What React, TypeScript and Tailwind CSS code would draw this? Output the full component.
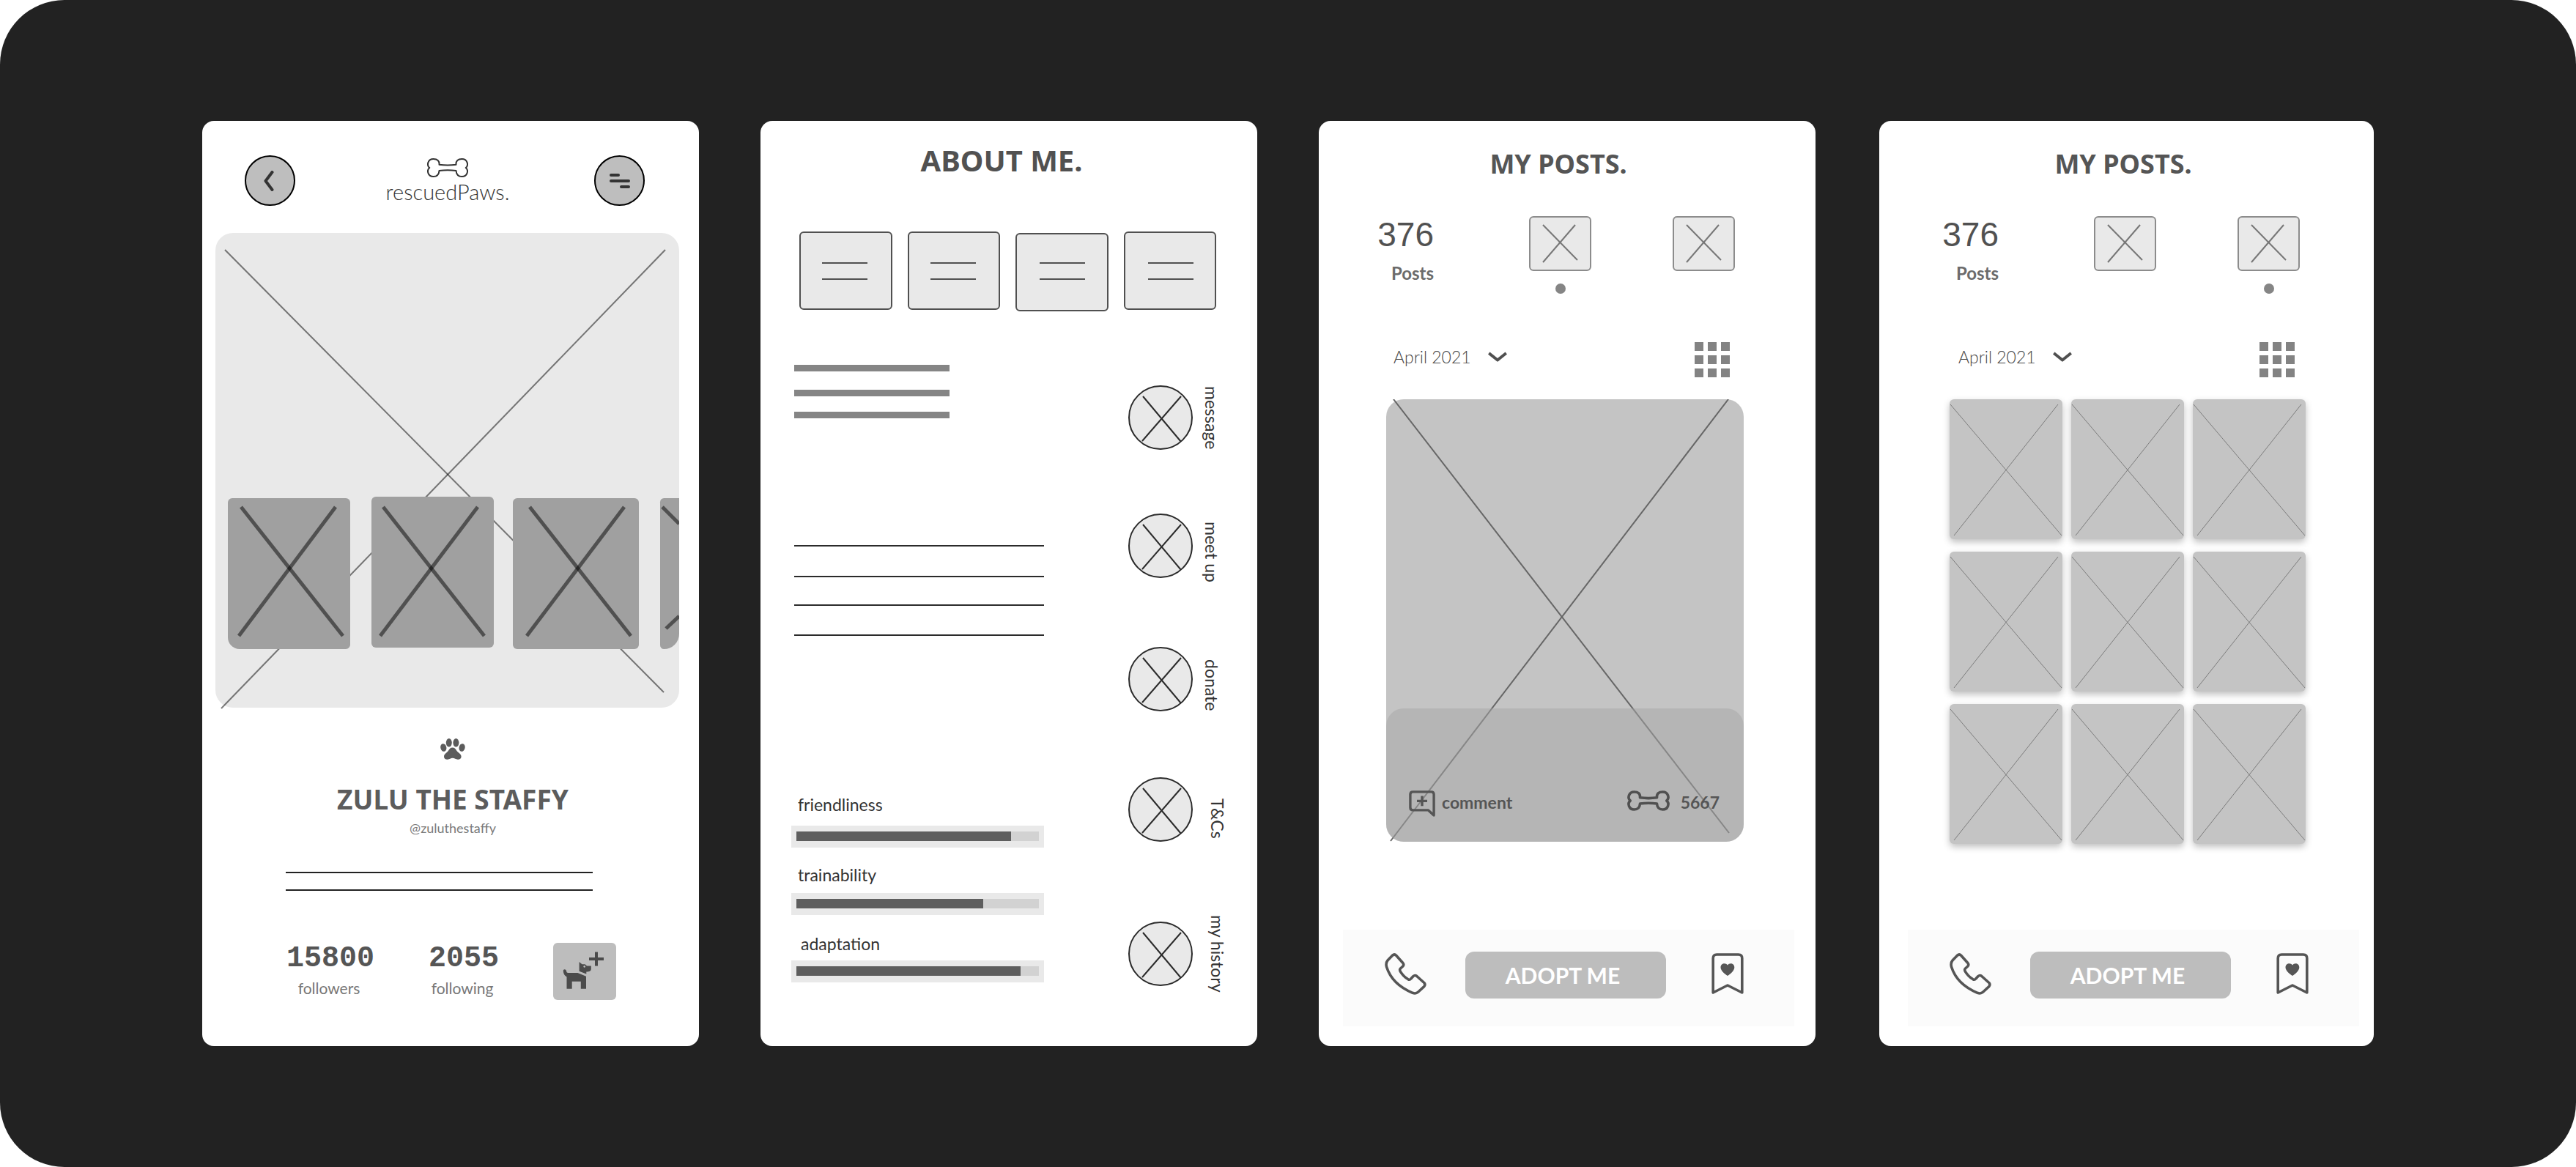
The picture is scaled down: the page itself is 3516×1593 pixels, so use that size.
import React from "react";

type LineProps = { className: string };

function Line({ className }: LineProps) {
  return <div className={className} />;
}

function BoneIcon({ className }: { className: string }) {
  return (
    <svg viewBox="0 0 56 26" className={className} fill="none" stroke="currentColor" strokeLinejoin="round" aria-hidden="true">
      <path d="M16.5 8.8Q28 10.4 39.5 8.8C39 3.5 42 1 47.5 1C55 1 57 9.5 52.8 13C57 16.5 55 25 47.5 25C42 25 39.8 21.5 39.5 17Q28 15.4 16.5 17C16.2 21.5 14 25 8.5 25C1 25-1 16.5 3.2 13C-1 9.5 1 1 8.5 1C14 1 17 3.5 16.5 8.8Z" />
    </svg>
  );
}

function PawIcon() {
  return (
    <svg viewBox="0 0 34 29" className="h-[29px] w-[34px] fill-[#5c5c5c]" aria-hidden="true">
      <ellipse cx="4.3" cy="12.5" rx="4" ry="5.4" transform="rotate(-14 4.3 12.5)" />
      <ellipse cx="11.8" cy="5.8" rx="4" ry="5.8" />
      <ellipse cx="21.4" cy="5.8" rx="4" ry="5.8" />
      <ellipse cx="29.6" cy="12.5" rx="4" ry="5.4" transform="rotate(14 29.6 12.5)" />
      <path d="M16.6 12.5C19.5 12.5 21 14.5 22.5 17C24.5 19.8 28.6 21 28.6 24.8C28.6 27.5 26.3 29 23.8 28.8C21 28.5 19.5 26.8 16.8 26.8C14 26.8 12.8 28.5 10 28.8C7 29 5 27.5 5 24.8C5 21 8.8 19.8 10.8 17C12.3 14.5 13.7 12.5 16.6 12.5Z" />
    </svg>
  );
}

function DogPlusIcon() {
  return (
    <svg viewBox="0 0 86 78" className="h-[78px] w-[86px]" aria-hidden="true">
      <g fill="#4b4b4b">
        <path d="M13.8 38.5C13.6 35.5 17.4 35.4 18 38.3C18.3 40 18.6 41 20.5 41H33.5L45 45.8V62.8H37.8V52.8H25.7V62.8H18.5V46.5C15.5 45 14 42 13.8 38.5Z" />
        <path fillRule="evenodd" d="M35.6 26L39.5 29.2H43.5L46 31.5H51.8V35.5C51.8 38.5 49.5 39.5 45.3 39.6V42.5L35.6 38.8ZM42.7 31a1.4 1.4 0 1 0 0.01 0Z" />
      </g>
      <path d="M49 22H69M59 12.5V31.5" stroke="#4b4b4b" strokeWidth="4" />
    </svg>
  );
}

function PhoneIcon() {
  return (
    <svg viewBox="0 0 57 57" className="h-[57px] w-[57px]" fill="none" stroke="#555" strokeWidth="3.6" strokeLinejoin="round" aria-hidden="true">
      <path d="M10.5 3.2Q13.3 0.8 15.7 3.2L24.6 13.2Q26.8 15.8 24.8 18L21.5 21Q20 22.5 21.2 24.8Q25.5 32 32 35.8Q34.2 37 35.8 35L39 31.5Q41.3 29.5 43.8 31.5L53.8 40.5Q56 43 53.8 45.6L45.5 53.3Q42.5 56 38 54.3Q10 42.5 2.6 19Q1 13.5 4.2 9.8Z" />
    </svg>
  );
}

function BookmarkIcon() {
  return (
    <svg viewBox="0 0 44 57" className="h-[57px] w-[44px]" aria-hidden="true">
      <path d="M2.2 54V7Q2.2 2 7.2 2H36.8Q41.8 2 41.8 7V54L22 44Z" fill="none" stroke="#555" strokeWidth="3.6" strokeLinejoin="round" />
      <path d="M22 31C18 28.2 12.5 24 12.5 19.4C12.5 14 19.3 12.6 22 16.4C24.7 12.6 31.3 14 31.3 19.4C31.3 24 26 28.2 22 31Z" fill="#555" />
    </svg>
  );
}

function CommentIcon() {
  return (
    <svg viewBox="0 0 36 36" className="h-9 w-9" fill="none" stroke="#555" strokeWidth="3.4" strokeLinejoin="round" aria-hidden="true">
      <path d="M5.5 1.9H30.5Q34.1 1.9 34.1 5.5V34L26.5 26.9H5.5Q1.9 26.9 1.9 23.3V5.5Q1.9 1.9 5.5 1.9Z" />
      <path d="M11 14.4H25M18 7.6V21.2" />
    </svg>
  );
}

type Seg = [number, number, number, number];

function Cross({ w, h, a, b, className }: { w: number; h: number; a: Seg; b: Seg; className: string }) {
  return (
    <svg viewBox={`0 0 ${w} ${h}`} preserveAspectRatio="none" className={className} aria-hidden="true">
      <line x1={a[0]} y1={a[1]} x2={a[2]} y2={a[3]} />
      <line x1={b[0]} y1={b[1]} x2={b[2]} y2={b[3]} />
    </svg>
  );
}

function ProfileScreen() {
  const thumbStroke = "block h-[206px] w-full stroke-black/50 [stroke-width:5]";
  return (
    <section className="col-start-1 rounded-2xl bg-white pt-[47px] pb-[62px]">
      <header className="grid grid-cols-[69px_1fr_69px] pr-[74px] pl-[58px]">
        <button aria-label="Back" className="flex h-[69px] w-[69px] items-center justify-center rounded-full border-2 border-black bg-[#bebebe]">
          <svg viewBox="0 0 14 28" className="mr-1 h-7 w-[14px]" fill="none" stroke="#333" strokeWidth="4" strokeLinecap="round" strokeLinejoin="round" aria-hidden="true">
            <path d="M11.5 2L2.5 14L11.5 26" />
          </svg>
        </button>
        <div className="flex flex-col items-center pt-1 pl-2">
          <BoneIcon className="h-[26px] w-[56px] text-[#333] [stroke-width:2]" />
          <p className="mt-[2px] text-[29px] leading-9 font-light text-[#333]">rescuedPaws.</p>
        </div>
        <button aria-label="Menu" className="flex h-[69px] w-[69px] items-center justify-center rounded-full border-2 border-black bg-[#bebebe]">
          <svg viewBox="0 0 28 20" className="h-5 w-7" stroke="#333" strokeWidth="4" strokeLinecap="round" aria-hidden="true">
            <path d="M2 2H12M2 10H26M16 18H26" />
          </svg>
        </button>
      </header>

      <div className="relative mt-[37px] mr-[27px] ml-[18px] flex h-[648px] flex-col justify-end rounded-3xl bg-[#e9e9e9] pb-[80px] pl-[17px]">
        <Cross w={633} h={648} a={[13, 23, 612, 627]} b={[614, 23, 8, 649]} className="absolute inset-0 h-full w-full overflow-visible stroke-black/50 [stroke-width:2]" />
        <div className="relative flex items-end overflow-hidden">
          <div className="w-[167px] flex-none rounded-md rounded-bl-2xl bg-[#a0a0a0]">
            <Cross w={167} h={206} a={[18, 12, 157, 188]} b={[147, 12, 15, 188]} className={thumbStroke} />
          </div>
          <div className="mb-[2px] ml-[29px] w-[167px] flex-none rounded-md bg-[#a0a0a0]">
            <Cross w={167} h={206} a={[16, 14, 154, 190]} b={[145, 14, 12, 190]} className={thumbStroke} />
          </div>
          <div className="ml-[26px] w-[172px] flex-none rounded-md bg-[#a0a0a0]">
            <Cross w={172} h={206} a={[23, 12, 161, 188]} b={[152, 12, 19, 188]} className={thumbStroke} />
          </div>
          <div className="ml-[29px] min-w-0 flex-1 rounded-l-md rounded-br-[24px] bg-[#a0a0a0]">
            <Cross w={26} h={206} a={[3, 12, 26, 35]} b={[26, 161, 8, 178]} className={thumbStroke} />
          </div>
        </div>
      </div>

      <div className="flex flex-col items-center pt-[42px] pl-[6px]">
        <PawIcon />
        <h1 className="mt-[30px] font-['Noto_Sans',sans-serif] text-[37px] leading-[48px] font-bold text-[#5c5c5c]">ZULU THE STAFFY</h1>
        <p className="mt-[3px] text-[18px] leading-6 text-[#7a7a7a]">@zuluthestaffy</p>
      </div>

      <div className="mt-12 mr-[145px] ml-[114px] flex flex-col gap-[22px]">
        <Line className="h-[2px] bg-[#222]" />
        <Line className="h-[2px] bg-[#222]" />
      </div>

      <div className="mt-[71px] flex items-start justify-between pr-[113px] pl-[115px]">
        <div className="pt-[2px] text-center">
          <p className="font-['Liberation_Mono',monospace] text-[40px] leading-10 font-bold text-[#555]">15800</p>
          <p className="mt-[6px] pr-1 text-[21px] leading-7 text-[#777]">followers</p>
        </div>
        <div className="pt-[2px] text-center">
          <p className="font-['Liberation_Mono',monospace] text-[40px] leading-10 font-bold text-[#555]">2055</p>
          <p className="mt-[6px] pr-1 text-[21px] leading-7 text-[#777]">following</p>
        </div>
        <button aria-label="Follow this dog" className="rounded-md bg-[#bdbdbd]">
          <DogPlusIcon />
        </button>
      </div>
    </section>
  );
}

const traits = [
  { name: "friendliness", value: 293, label: "pl-[9px] pb-[15px]", gap: "mt-[216px]" },
  { name: "trainability", value: 255, label: "pl-[9px] pb-[11px]", gap: "mt-[23px]" },
  { name: "adaptation", value: 306, label: "pl-[13px] pb-[9px]", gap: "mt-[25px]" },
];

const actions = [
  { name: "message", gap: "mt-[28px]", label: "ml-3" },
  { name: "meet up", gap: "mt-[87px]", label: "ml-3 pt-4" },
  { name: "donate", gap: "mt-[94px]", label: "ml-3 pt-4" },
  { name: "T&Cs", gap: "mt-[90px]", label: "ml-5 pt-6" },
  { name: "my history", gap: "mt-[109px]", label: "ml-5" },
];

const tabs = [
  { box: "h-[107px]", lines: "mr-[2px]" },
  { box: "h-[107px]", lines: "mr-[2px]" },
  { box: "mt-[2px] h-[107px]", lines: "ml-[2px] -mt-1" },
  { box: "h-[107px]", lines: "ml-[2px]" },
];

function AboutScreen() {
  return (
    <section className="col-start-3 rounded-2xl bg-white pt-[30px]">
      <h2 className="pr-[20px] text-center font-['Noto_Sans',sans-serif] text-[40px] leading-[48px] font-bold text-[#515151]">ABOUT ME.</h2>

      <div className="mt-[73px] grid grid-cols-4 items-start gap-[21px] pr-[56px] pl-[53px]">
        {tabs.map((t, i) => (
          <button key={i} aria-label={`Section ${i + 1}`} className={`flex items-center justify-center rounded-md border-2 border-[#505050] bg-[#e9e9e9] ${t.box}`}>
            <span className={`flex flex-col gap-5 ${t.lines}`}>
              <span className="h-[2px] w-[62px] bg-[#505050]" />
              <span className="h-[2px] w-[62px] bg-[#505050]" />
            </span>
          </button>
        ))}
      </div>

      <div className="mt-[73px] flex items-start pl-[42px]">
        <div className="w-[345px]">
          <Line className="ml-1 h-[9px] w-[212px] bg-[#858585]" />
          <Line className="mt-[25px] ml-1 h-[9px] w-[212px] bg-[#858585]" />
          <Line className="mt-[21px] ml-1 h-[9px] w-[212px] bg-[#858585]" />
          <Line className="mt-[173px] ml-1 h-[2px] bg-[#2b2b2b]" />
          <Line className="mt-[40px] ml-1 h-[2px] bg-[#2b2b2b]" />
          <Line className="mt-[37px] ml-1 h-[2px] bg-[#2b2b2b]" />
          <Line className="mt-[39px] ml-1 h-[2px] bg-[#2b2b2b]" />
          {traits.map((t) => (
            <div key={t.name} className={t.gap}>
              <p className={`text-[23px] leading-7 text-[#333] ${t.label}`}>{t.name}</p>
              <div className="h-[30px] bg-[#e9e9e9] px-[7px] py-2">
                <div role="progressbar" aria-label={t.name} aria-valuenow={Math.round((t.value / 331) * 100)} className="h-[13px] bg-[#d2d2d2]">
                  <div className="h-full bg-[#5e5e5e]" style={{ width: `${(t.value / 331) * 100}%` }} />
                </div>
              </div>
            </div>
          ))}
        </div>
        <div className="ml-[115px]">
          {actions.map((a) => (
            <button key={a.name} className={`flex h-[88px] items-center ${a.gap}`}>
              <span className="h-[88px] w-[88px] flex-none rounded-full border-2 border-[#2b2b2b] bg-[#e9e9e9]">
                <Cross w={84} h={84} a={[18, 13, 70, 75]} b={[70, 13, 17, 74]} className="block h-[84px] w-[84px] stroke-[#2b2b2b] [stroke-width:2]" />
              </span>
              <span className={`text-[23px] leading-7 whitespace-nowrap text-[#333] [writing-mode:vertical-rl] ${a.label}`}>{a.name}</span>
            </button>
          ))}
        </div>
      </div>
    </section>
  );
}

function ViewTab({ active, label }: { active: boolean; label: string }) {
  return (
    <div className="flex w-[85px] flex-col items-center">
      <button aria-label={label} aria-pressed={active} className="rounded-md border-2 border-[#8c8c8c] bg-[#e9e9e9]">
        <Cross w={81} h={71} a={[17, 10, 64, 58]} b={[61, 10, 17, 61]} className="block h-[71px] w-[81px] stroke-[#777] [stroke-width:2]" />
      </button>
      {active && <span className="mt-[17px] h-[14px] w-[14px] rounded-full bg-[#858585]" />}
    </div>
  );
}

function PostsHeader({ activeTab }: { activeTab: number }) {
  return (
    <>
      <h2 className="pr-[28px] text-center font-['Noto_Sans',sans-serif] text-[36px] leading-[48px] font-bold text-[#555]">MY POSTS.</h2>
      <div className="mt-[47px] grid h-[107px] grid-cols-[207fr_196fr_85fr] pr-[81px] pl-[47px]">
        <div className="w-[77px] text-right">
          <p className="font-['Liberation_Sans',sans-serif] text-[46px] leading-[50px] text-[#515151]">376</p>
          <p className="mt-[14px] text-[24px] leading-7 font-bold text-[#6b6b6b]">Posts</p>
        </div>
        <ViewTab active={activeTab === 0} label="Single view" />
        <ViewTab active={activeTab === 1} label="Grid view" />
      </div>
      <div className="mt-[65px] flex items-start justify-between pr-[88px] pl-[69px]">
        <div className="relative w-[155px] pt-[6px]">
          <select aria-label="Month" className="w-full appearance-none bg-transparent text-[23px] leading-7 font-light text-[#444]">
            <option>April 2021</option>
          </select>
          <svg viewBox="0 0 26 14" className="pointer-events-none absolute top-[13px] right-0 h-[14px] w-[26px]" fill="none" stroke="#505050" strokeWidth="4" strokeLinejoin="round" aria-hidden="true">
            <path d="M1.2 2L13 11.5L24.8 2" />
          </svg>
        </div>
        <button aria-label="Show as grid" className="grid grid-cols-3 gap-[6px]">
          {Array.from({ length: 9 }, (_, i) => (
            <span key={i} className="h-3 w-3 bg-[#838383]" />
          ))}
        </button>
      </div>
    </>
  );
}

function PostsFooter() {
  return (
    <footer className="grid h-[132px] grid-cols-[110fr_336fr_44fr] items-start bg-[#fbfbfb] pt-[30px] pr-[69px] pl-[57px]">
      <button aria-label="Call" className="mt-[2px] justify-self-start">
        <PhoneIcon />
      </button>
      <button className="h-16 w-[274px] rounded-xl bg-[#bdbdbd] pr-2 text-center text-[30px] leading-9 font-bold text-white">ADOPT ME</button>
      <button aria-label="Save" className="mt-[2px] justify-self-start">
        <BookmarkIcon />
      </button>
    </footer>
  );
}

function PostScreen() {
  return (
    <section className="col-start-5 rounded-2xl bg-white pt-[35px] pr-[29px] pb-[27px] pl-[33px]">
      <PostsHeader activeTab={0} />
      <article className="relative mt-[30px] mr-[69px] ml-[59px] flex h-[604px] flex-col justify-end rounded-3xl bg-[#c4c4c4]">
        <Cross w={488} h={604} a={[10, 0, 468, 592]} b={[467, 0, 6, 603]} className="absolute inset-0 h-full w-full stroke-[#666] [stroke-width:2]" />
        <div className="relative flex h-[182px] items-start justify-between rounded-3xl bg-[#a5a5a5]/50 pt-[112px] pr-[33px] pl-[31px]">
          <button className="flex items-start gap-[9px] text-[23px] leading-7 font-bold text-[#555]">
            <CommentIcon />
            <span className="pt-[2px]">comment</span>
          </button>
          <button className="flex items-start gap-4 text-[23px] leading-7 font-bold text-[#555]">
            <BoneIcon className="h-[28px] w-[56px] overflow-visible text-[#505050] [stroke-width:3.6]" />
            <span className="pt-[2px]">5667</span>
          </button>
        </div>
      </article>
      <div className="pt-[120px]">
        <PostsFooter />
      </div>
    </section>
  );
}

function GridScreen() {
  return (
    <section className="col-start-7 rounded-2xl bg-white pt-[35px] pr-[20px] pb-[27px] pl-[39px]">
      <PostsHeader activeTab={1} />
      <div className="mt-[30px] mr-[73px] ml-[57px] grid grid-cols-3 gap-x-3 gap-y-[17px]">
        {Array.from({ length: 9 }, (_, i) => (
          <button key={i} aria-label={`Post ${i + 1}`} className="h-[191px] rounded-md bg-[#c4c4c4] shadow-[0_4px_10px_rgba(0,0,0,0.25)]">
            <Cross w={154} h={191} a={[1, 7, 153, 186]} b={[148, 7, 6, 186]} className="block h-full w-full stroke-[#7c7c7c] [stroke-width:1]" />
          </button>
        ))}
      </div>
      <div className="pt-[117px]">
        <PostsFooter />
      </div>
    </section>
  );
}

export default function App() {
  return (
    <main className="grid min-h-screen grid-cols-[678fr_84fr_678fr_84fr_678fr_87fr_675fr] rounded-[88px] bg-[#222] px-[276px] py-[165px] font-[Lato,sans-serif]">
      <ProfileScreen />
      <AboutScreen />
      <PostScreen />
      <GridScreen />
    </main>
  );
}
